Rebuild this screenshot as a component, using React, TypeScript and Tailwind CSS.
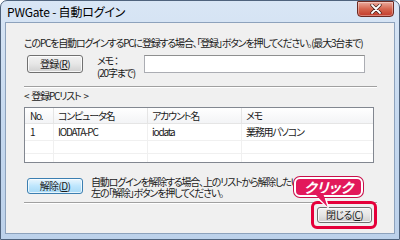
export default function App() {
  const btn =
    "flex items-center justify-center rounded-[3px] border border-[#707070] bg-gradient-to-b from-[#f2f2f2] via-[#e6e6e6] to-[#d0d0d0] shadow-[inset_0_0_0_1px_rgba(255,255,255,0.8)] text-[10px] leading-none tracking-[-0.6px]";
  return (
    <div className="w-[400px] h-[240px] relative overflow-hidden bg-white font-['Noto_Sans_CJK_JP',sans-serif] [font-feature-settings:'palt'] text-[#1a1a1a]">
      <div className="w-full h-full border border-[#4f637d] rounded-t-[7px] bg-gradient-to-b from-[#d9e6f5] via-[#c6d9ef] to-[#bcd1ea] flex flex-col">
        <div className="h-[21px] flex items-center pl-[6px] text-[12px] leading-none text-[#000] tracking-[-0.2px]">PWGate - 自動ログイン</div>
        <div className="mx-[4px] mb-[5px] flex-1 border border-[#8da2bc] bg-[#f0f0f0] flex flex-col pl-[18px] text-[10px] leading-[12px] tracking-[-1.2px]">
          <div className="mt-[14px] h-[12px] whitespace-nowrap">
            このPCを自動ログインするPCに登録する場合、「登録」ボタンを押してください。(最大3台まで)
          </div>
          <div className="mt-[6px] h-[25px] flex items-start">
            <div className={`${btn} ml-[3px] w-[56px] h-[18px]`}>登録(<span className="underline">R</span>)</div>
            <div className="ml-[14px] w-[47px] flex flex-col leading-[12px] whitespace-nowrap">
              <span>メモ ：</span>
              <span>(20字まで)</span>
            </div>
            <div className="w-[221px] h-[18px] bg-white border border-[#abadb3] border-t-[#8e8f8f]" />
          </div>
          <div className="mt-[6px] w-[353px] h-[2px] border-t border-[#a0a0a0] border-b border-b-white" />
          <div className="mt-[2px] h-[12px] flex items-center gap-[3px] whitespace-nowrap">
            <span>&lt;</span>
            <span>登録PCリスト</span>
            <span>&gt;</span>
          </div>
          <div className="mt-[5px] w-[350px] h-[56px] border border-[#828790] bg-white flex flex-col">
            <div className="h-[16px] flex border-b border-[#e5e5e5] bg-gradient-to-b from-white to-[#f3f4f6]">
              <div className="w-[29px] pl-[5px] flex items-center border-r border-[#e5e5e5]">No.</div>
              <div className="w-[94px] pl-[4px] flex items-center border-r border-[#e5e5e5]">コンピュータ名</div>
              <div className="w-[94px] pl-[4px] flex items-center border-r border-[#e5e5e5]">アカウント名</div>
              <div className="flex-1 pl-[4px] flex items-center">メモ</div>
            </div>
            <div className="h-[17px] flex border-b border-[#f0f0f0]">
              <div className="w-[29px] pl-[5px] flex items-center border-r border-[#f0f0f0]">1</div>
              <div className="w-[94px] pl-[4px] flex items-center border-r border-[#f0f0f0]">IODATA-PC</div>
              <div className="w-[94px] pl-[4px] flex items-center border-r border-[#f0f0f0]">iodata</div>
              <div className="flex-1 pl-[4px] flex items-center">業務用パソコン</div>
            </div>
            <div className="h-[13px] flex border-b border-[#f0f0f0]">
              <div className="w-[29px] border-r border-[#f0f0f0]" />
              <div className="w-[94px] border-r border-[#f0f0f0]" />
              <div className="w-[94px] border-r border-[#f0f0f0]" />
              <div className="flex-1" />
            </div>
            <div className="flex-1 flex">
              <div className="w-[29px] border-r border-[#f0f0f0]" />
              <div className="w-[94px] border-r border-[#f0f0f0]" />
              <div className="w-[94px] border-r border-[#f0f0f0]" />
              <div className="flex-1" />
            </div>
          </div>
          <div className="mt-[15px] h-[20px] flex items-start">
            <div className="ml-[3px] w-[56px] h-[16px] flex items-center justify-center rounded-[3px] border border-[#3c7fb1] bg-gradient-to-b from-[#eaf6fd] via-[#bee6fd] to-[#a7d9f5] shadow-[inset_0_0_0_1px_rgba(255,255,255,0.7)] text-[10px] leading-none tracking-[-0.6px]">
              解除(<span className="underline">D</span>)
            </div>
            <div className="ml-[8px] -mt-[2px] flex flex-col leading-[11px] whitespace-nowrap">
              <span>自動ログインを解除する場合、上のリストから解除したいPCを選択して、</span>
              <span>左の「解除」ボタンを押してください。</span>
            </div>
          </div>
          <div className="mt-[4px] w-[353px] h-[2px] border-t border-[#a0a0a0] border-b border-b-white" />
          <div className={`${btn} mt-[3px] ml-[293px] w-[55px] h-[16px]`}>閉じる(<span className="underline">C</span>)</div>
        </div>
      </div>

      {/* close button */}
      <div className="absolute left-[357px] top-[1px] w-[37px] h-[16px] rounded-b-[4px] rounded-t-[1px] border border-[#6d2a22] bg-gradient-to-b from-[#e9a99c] via-[#d5654f] to-[#c23a2a] flex items-center justify-center shadow-[inset_0_0_0_1px_rgba(255,255,255,0.35)]">
        <svg width="12" height="10" viewBox="0 0 12 10">
          <path d="M2 1 L10 9 M10 1 L2 9" stroke="#3a1a16" strokeWidth="3.2" strokeLinecap="round" />
          <path d="M2 1 L10 9 M10 1 L2 9" stroke="#ffffff" strokeWidth="1.8" strokeLinecap="round" />
        </svg>
      </div>

      {/* red highlight */}
      <div className="absolute left-[311px] top-[201px] w-[66px] h-[28px] rounded-[6px] border-[3px] border-[#e5003a]" />

      {/* callout */}
      <svg className="absolute left-[305px] top-[192px]" width="30" height="18" viewBox="0 0 30 18">
        <polygon points="8,2 19,2 23,15" fill="#e2195b" stroke="#ffffff" strokeWidth="2" strokeLinejoin="round" />
      </svg>
      <div className="absolute left-[294px] top-[177px] w-[69px] h-[20px] rounded-[6px] bg-[#e2195b] border-2 border-white shadow-[0_0_0_1px_#c8104a] flex items-center justify-center text-white text-[14px] font-bold italic leading-none">
        クリック
      </div>
      <svg className="absolute left-[305px] top-[193px]" width="30" height="18" viewBox="0 0 30 18">
        <polygon points="9,0 18,0 22.5,14" fill="#e2195b" />
      </svg>
    </div>
  );
}
